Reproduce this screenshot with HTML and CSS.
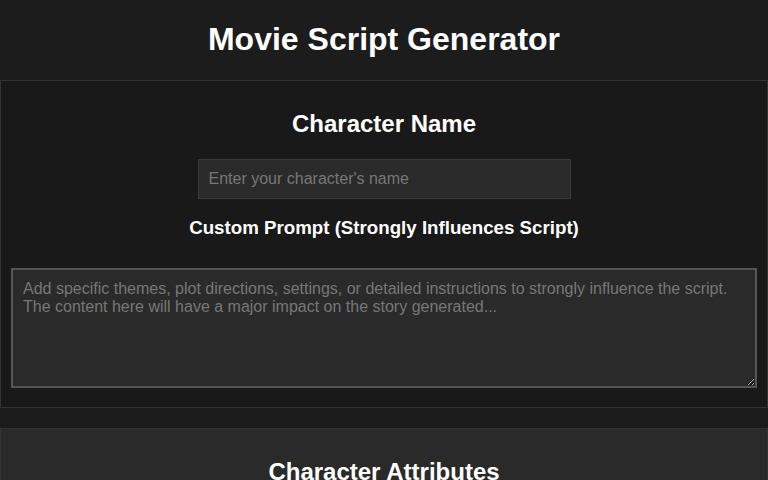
FILE: index.html
```html
<!DOCTYPE html>
<html lang="en">
  <head>
    <title>Movie Script Generator</title>
    <meta name="viewport" content="width=device-width, initial-scale=1">
    <link rel="stylesheet" href="styles.css">
  </head>
  <body>
    <header class="header">
      <h1>Movie Script Generator</h1>
    </header>
    <div class="section">
      <h2>Character Name</h2>
      <input type="text" class="name-input" id="characterName" placeholder="Enter your character's name">
      <label class="prompt-label" for="customPrompt">Custom Prompt (Strongly Influences Script)</label>
      <textarea class="prompt-input" id="customPrompt" placeholder="Add specific themes, plot directions, settings, or detailed instructions to strongly influence the script. The content here will have a major impact on the story generated..."></textarea>
    </div>
    <div class="section section-alt">
      <h2>Character Attributes</h2>
    </div>
  </body>
</html>
```

FILE: styles.css
```css
    body {
      font-family: "Liberation Sans", Arial, sans-serif;
      margin: 0;
      padding: 0;
      background-color: #1c1c1c;
      color: #fff;
    }
    .header {
      padding: 19px 0 21px;
      text-align: center;
    }
    .header h1 {
      margin: 0;
      font-size: 32px;
      line-height: 40px;
    }
    .section {
      background-color: #191919;
      border: 1px solid #333;
      padding: 10px 10px 19px;
      text-align: center;
      margin-bottom: 20px;
    }
    .section-alt {
      background-color: #2a2a2a;
    }
    .section h2 {
      font-size: 24px;
      line-height: 28px;
      margin: 19px 0 21px;
    }
    .name-input {
      display: block;
      box-sizing: border-box;
      width: 50%;
      height: 40px;
      margin: 0 auto;
      padding: 10px;
      font-family: inherit;
      font-size: 16px;
      color: #fff;
      background-color: #2a2a2a;
      border: 1px solid #3a3a3a;
    }
    .prompt-label {
      display: block;
      font-size: 18.72px;
      font-weight: bold;
      line-height: 22px;
      margin: 18px 0 29px;
    }
    .prompt-input {
      display: block;
      box-sizing: border-box;
      width: 100%;
      height: 120px;
      padding: 10px;
      font-family: inherit;
      font-size: 16px;
      line-height: 18px;
      color: #fff;
      background-color: #2a2a2a;
      border: 2px solid #555;
      text-align: left;
    }
    ::placeholder {
      color: #777;
    }
```
